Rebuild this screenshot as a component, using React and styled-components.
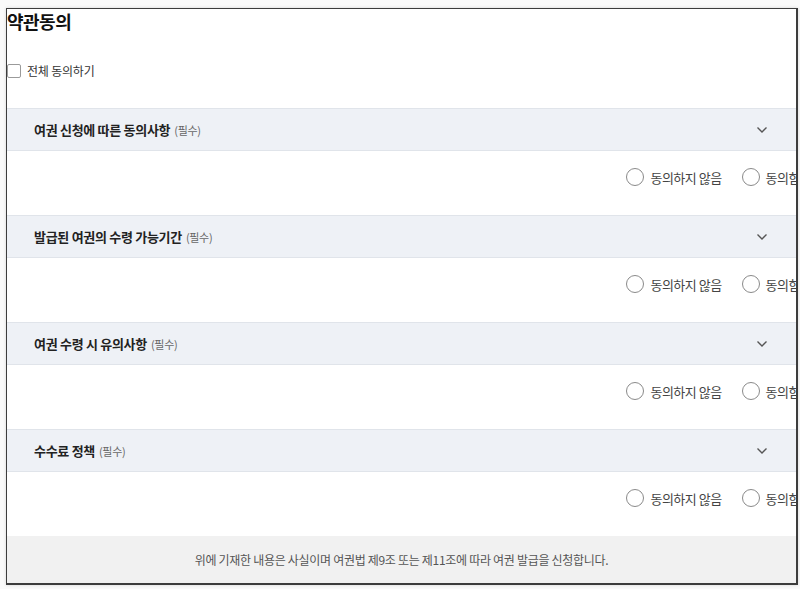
import React from "react";
import styled, { createGlobalStyle } from "styled-components";

const GlobalStyle = createGlobalStyle`
  html, body {
    margin: 0;
    padding: 0;
    background: #ffffff;
    font-family: "Noto Sans CJK KR", "Noto Sans", sans-serif;
  }
  * {
    box-sizing: border-box;
  }
`;

const Page = styled.div`
  width: 800px;
  height: 589px;
  padding: 8px 2px 4px 6px;
  background: #fafafa;
`;

const Frame = styled.section`
  height: 577px;
  background: #ffffff;
  border: 1px solid #3d3d3d;
  border-right-width: 2px;
  border-bottom-width: 2px;
  box-shadow: 0 0 3px rgba(0, 0, 0, 0.15);
  overflow: hidden;
  display: flex;
  flex-direction: column;
`;

const Title = styled.h2`
  margin: 0;
  font-size: 18px;
  line-height: 25px;
  font-weight: 700;
  color: #111;
  letter-spacing: -0.5px;
`;

const AllAgree = styled.label`
  display: flex;
  align-items: center;
  gap: 6px;
  margin: 27px 0 28px;
  height: 20px;
  font-size: 12px;
  color: #333;
  letter-spacing: -0.2px;
`;

const CheckBox = styled.span`
  width: 14px;
  height: 14px;
  border: 1px solid #9a9a9a;
  border-radius: 2px;
  background: #fff;
`;

const Section = styled.div`
  display: flex;
  flex-direction: column;
`;

const Header = styled.div`
  height: 43px;
  display: flex;
  align-items: center;
  justify-content: space-between;
  padding: 0 28px 0 27px;
  background: #eef1f6;
  border-top: 1px solid #e0e4ea;
  border-bottom: 1px solid #e0e4ea;
`;

const HeaderTitle = styled.div`
  font-size: 13px;
  font-weight: 700;
  color: #222;
  letter-spacing: -0.3px;
`;

const Required = styled.span`
  margin-left: 4px;
  font-size: 11px;
  font-weight: 400;
  color: #666;
`;

const Body = styled.div`
  height: 64px;
  display: flex;
  justify-content: flex-end;
  padding-top: 15px;
  margin-right: -4px;
`;

const RadioGroup = styled.div`
  display: flex;
  align-items: center;
  gap: 20px;
  height: 22px;
`;

const RadioLabel = styled.label`
  display: flex;
  align-items: center;
  gap: 6px;
  font-size: 13px;
  color: #444;
  letter-spacing: -0.5px;
  white-space: nowrap;
`;

const RadioCircle = styled.span`
  width: 18px;
  height: 18px;
  border: 1px solid #8a8a8a;
  border-radius: 50%;
  background: #fff;
`;

const Footer = styled.div`
  margin-top: auto;
  height: 48px;
  display: flex;
  align-items: center;
  justify-content: center;
  background: #f1f1f1;
  font-size: 12px;
  color: #555;
  letter-spacing: -0.3px;
`;

const Chevron = () => (
  <svg width="12" height="8" viewBox="0 0 12 8" fill="none">
    <path d="M1.5 1.5 L6 6 L10.5 1.5" stroke="#555" strokeWidth="1.4" />
  </svg>
);

const terms = [
  "여권 신청에 따른 동의사항",
  "발급된 여권의 수령 가능기간",
  "여권 수령 시 유의사항",
  "수수료 정책",
];

export default function App() {
  return (
    <>
      <GlobalStyle />
      <Page>
        <Frame>
          <Title>약관동의</Title>
          <AllAgree>
            <CheckBox />
            전체 동의하기
          </AllAgree>
          {terms.map((t) => (
            <Section key={t}>
              <Header>
                <HeaderTitle>
                  {t}
                  <Required>(필수)</Required>
                </HeaderTitle>
                <Chevron />
              </Header>
              <Body>
                <RadioGroup>
                  <RadioLabel>
                    <RadioCircle />
                    동의하지 않음
                  </RadioLabel>
                  <RadioLabel>
                    <RadioCircle />
                    동의함
                  </RadioLabel>
                </RadioGroup>
              </Body>
            </Section>
          ))}
          <Footer>
            위에 기재한 내용은 사실이며 여권법 제9조 또는 제11조에 따라 여권 발급을 신청합니다.
          </Footer>
        </Frame>
      </Page>
    </>
  );
}
